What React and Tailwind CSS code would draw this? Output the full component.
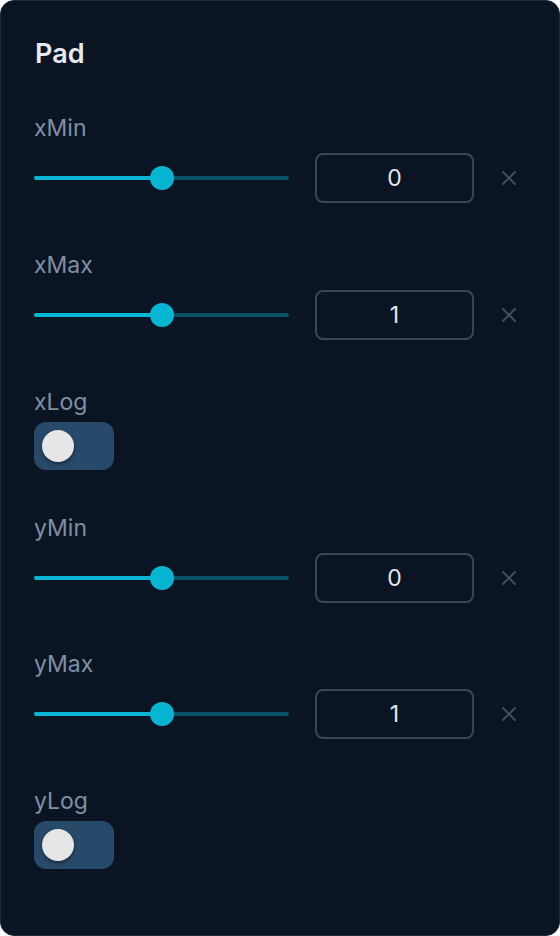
import React from "react";

function SliderRow({ label, value }) {
  return (
    <div className="flex flex-col">
      <div className="h-6 leading-6 text-[23px] text-[#7f90a4]">{label}</div>
      <div className="mt-[13px] flex items-center h-[50px]">
        <div className="relative w-[255px] h-6 flex items-center">
          <div className="absolute left-0 right-0 h-1 rounded-full bg-[#0b5166]" />
          <div className="absolute left-0 w-1/2 h-1 rounded-full bg-[#06b6d4]" />
          <div className="absolute left-1/2 -ml-3 w-6 h-6 rounded-full bg-[#06b6d4]" />
        </div>
        <div className="ml-[26px] w-[159px] h-[50px] rounded-lg border-2 border-[#3d4553] flex items-center justify-center text-[23px] text-[#e5e7eb]">
          {value}
        </div>
        <div className="ml-[27px] w-4 h-4 flex items-center justify-center">
          <svg width="16" height="16" viewBox="0 0 16 16" fill="none" stroke="#444d5b" strokeWidth="2" strokeLinecap="round">
            <path d="M2 2 L14 14 M14 2 L2 14" />
          </svg>
        </div>
      </div>
    </div>
  );
}

function ToggleRow({ label }) {
  return (
    <div className="flex flex-col">
      <div className="h-6 leading-6 text-[23px] text-[#7f90a4]">{label}</div>
      <div className="mt-2 w-[80px] h-[48px] rounded-[12px] bg-[#284a6a] flex items-center pl-2">
        <div className="w-8 h-8 rounded-full bg-[#e6e6e6] shadow-[0_2px_4px_rgba(0,0,0,0.45)]" />
      </div>
    </div>
  );
}

export default function App() {
  return (
    <div
      className="w-[560px] h-[936px] rounded-[14px] border border-[#1d2b3c] bg-[#0b1422] pl-[33px] pt-[37px]"
      style={{ fontFamily: "Inter, 'Noto Sans', sans-serif" }}
    >
      <div className="h-8 leading-8 text-[27px] font-semibold text-[#e5e9f0] pl-px">Pad</div>
      <div className="mt-[46px] flex flex-col">
        <SliderRow label="xMin" value="0" />
        <div className="mt-[50px]">
          <SliderRow label="xMax" value="1" />
        </div>
        <div className="mt-[50px]">
          <ToggleRow label="xLog" />
        </div>
        <div className="mt-[46px]">
          <SliderRow label="yMin" value="0" />
        </div>
        <div className="mt-[49px]">
          <SliderRow label="yMax" value="1" />
        </div>
        <div className="mt-[50px]">
          <ToggleRow label="yLog" />
        </div>
      </div>
    </div>
  );
}
